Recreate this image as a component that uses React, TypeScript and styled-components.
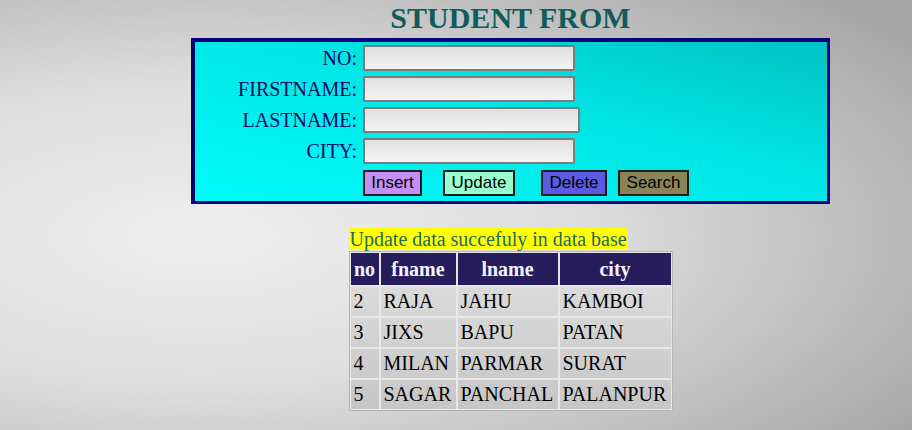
import React from 'react'
import styled, { createGlobalStyle } from 'styled-components'

const GlobalStyle = createGlobalStyle`
  html, body {
    margin: 0;
    padding: 0;
  }
  body {
    min-height: 430px;
    font-family: "Liberation Serif", "Times New Roman", serif;
    background: radial-gradient(ellipse 95% 80% at 22% 55%, #efefef 0%, #dddddd 45%, #a6a6a6 100%);
  }
`

const Page = styled.div`
  width: 912px;
  height: 430px;
  overflow: hidden;
  padding-left: 191px;
  box-sizing: border-box;
`

const Title = styled.h1`
  width: 639px;
  margin: 1px 0 3px;
  text-align: center;
  font-size: 30px;
  line-height: 34px;
  font-weight: bold;
  color: #0f5c5c;
`

const FormBox = styled.div`
  width: 639px;
  height: 166px;
  box-sizing: border-box;
  border: 3px solid #04047e;
  box-shadow: inset 1px 1px 0 #02024a;
  background: linear-gradient(to top right, #00fbfb 0%, #00e6e6 55%, #00c2c2 100%);
  padding: 4px 0 0 0;
`

const FieldGrid = styled.div`
  display: grid;
  grid-template-columns: 163px auto;
  column-gap: 6px;
  row-gap: 5px;
  align-items: center;
`

const Label = styled.label`
  text-align: right;
  font-size: 20px;
  color: #0a0a60;
  line-height: 26px;
`

const Input = styled.input<{ $w: number }>`
  width: ${(p) => p.$w}px;
  height: 26px;
  box-sizing: border-box;
  border: 2px solid #7c7c7c;
  border-radius: 2px;
  background: linear-gradient(to bottom, #e0e0e0, #f3f3f3);
  outline: none;
`

const ButtonRow = styled.div`
  grid-column: 2;
  display: flex;
  margin-top: 1px;
`

const Button = styled.button<{ $bg: string; $w: number; $gap: number }>`
  width: ${(p) => p.$w}px;
  height: 26px;
  margin-left: ${(p) => p.$gap}px;
  padding: 0;
  box-sizing: border-box;
  border: 2px solid #1c1c1c;
  background: ${(p) => p.$bg};
  font-family: "Liberation Sans", Arial, sans-serif;
  font-size: 17px;
  color: #000;
`

const ResultArea = styled.div`
  width: 639px;
  margin-top: 24px;
  display: flex;
  justify-content: center;
`

const ResultBlock = styled.div`
  display: flex;
  flex-direction: column;
  align-items: flex-start;
`

const Message = styled.span`
  margin-left: 1px;
  background: #ffff00;
  color: #1c6b5c;
  font-size: 20px;
  line-height: 22px;
  padding-right: 1px;
`

const Table = styled.table`
  margin-top: 1px;
  border-collapse: separate;
  border-spacing: 0;
  border: 1px solid #b4b4b4;
  background: linear-gradient(to bottom, #e0e0e0, #c6c6c6);
`

const Th = styled.th<{ $w: number }>`
  width: ${(p) => p.$w}px;
  height: 34px;
  box-sizing: border-box;
  background: #271d5c;
  color: #f4f4ff;
  font-size: 20px;
  font-weight: bold;
  text-align: center;
  border: 1px solid #e6e6e6;
  padding: 0 3px;
`

const Td = styled.td`
  height: 31px;
  box-sizing: border-box;
  font-size: 20px;
  color: #000;
  border: 1px solid #e8e8e8;
  padding: 0 3px;
  text-align: left;
  white-space: nowrap;
`

const fields = [
  { label: 'NO:', w: 212 },
  { label: 'FIRSTNAME:', w: 212 },
  { label: 'LASTNAME:', w: 217 },
  { label: 'CITY:', w: 212 },
]

const buttons = [
  { text: 'Insert', bg: '#c28ef8', w: 59, gap: 0 },
  { text: 'Update', bg: '#99ffcc', w: 72, gap: 21 },
  { text: 'Delete', bg: '#5a5ae2', w: 66, gap: 26 },
  { text: 'Search', bg: '#8a8558', w: 71, gap: 11 },
]

const columns = [
  { name: 'no', w: 30 },
  { name: 'fname', w: 77 },
  { name: 'lname', w: 102 },
  { name: 'city', w: 113 },
]

const rows = [
  ['2', 'RAJA', 'JAHU', 'KAMBOI'],
  ['3', 'JIXS', 'BAPU', 'PATAN'],
  ['4', 'MILAN', 'PARMAR', 'SURAT'],
  ['5', 'SAGAR', 'PANCHAL', 'PALANPUR'],
]

const App: React.FC = () => {
  return (
    <>
      <GlobalStyle />
      <Page>
        <Title>STUDENT FROM</Title>
        <FormBox>
          <FieldGrid>
            {fields.map((f) => (
              <React.Fragment key={f.label}>
                <Label>{f.label}</Label>
                <Input $w={f.w} type='text' />
              </React.Fragment>
            ))}
            <ButtonRow>
              {buttons.map((b) => (
                <Button key={b.text} $bg={b.bg} $w={b.w} $gap={b.gap}>
                  {b.text}
                </Button>
              ))}
            </ButtonRow>
          </FieldGrid>
        </FormBox>
        <ResultArea>
          <ResultBlock>
            <Message>Update data succefuly in data base</Message>
            <Table>
              <thead>
                <tr>
                  {columns.map((c) => (
                    <Th key={c.name} $w={c.w}>
                      {c.name}
                    </Th>
                  ))}
                </tr>
              </thead>
              <tbody>
                {rows.map((r) => (
                  <tr key={r[0]}>
                    {r.map((cell, i) => (
                      <Td key={i}>{cell}</Td>
                    ))}
                  </tr>
                ))}
              </tbody>
            </Table>
          </ResultBlock>
        </ResultArea>
      </Page>
    </>
  )
}

export default App
